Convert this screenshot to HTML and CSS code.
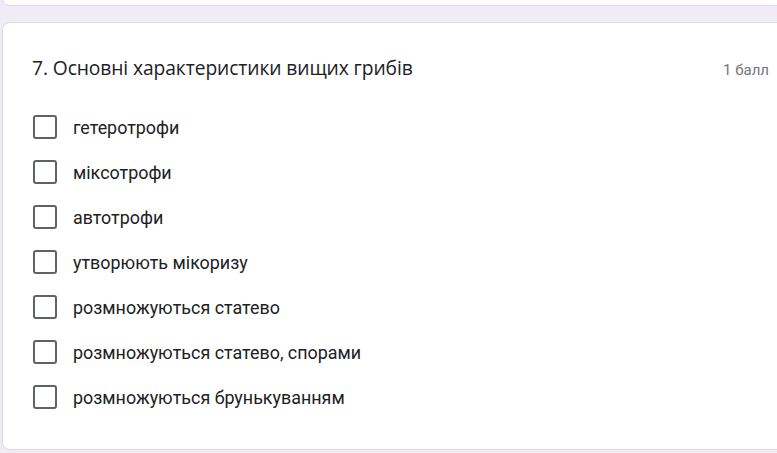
FILE: index.html
```html
<!DOCTYPE html>
<html lang="uk">
<head>
<meta charset="utf-8">
<link rel="stylesheet" href="styles.css">
</head>
<body>
<div class="page">
  <div class="card prev"></div>
  <div class="card question">
    <div class="head">
      <div class="title">7. Основні характеристики вищих грибів</div>
      <div class="points">1 балл</div>
    </div>
    <div class="options">
      <label class="opt"><span class="box"></span><span class="txt">гетеротрофи</span></label>
      <label class="opt"><span class="box"></span><span class="txt">міксотрофи</span></label>
      <label class="opt"><span class="box"></span><span class="txt">автотрофи</span></label>
      <label class="opt"><span class="box"></span><span class="txt">утворюють мікоризу</span></label>
      <label class="opt"><span class="box"></span><span class="txt">розмножуються статево</span></label>
      <label class="opt"><span class="box"></span><span class="txt">розмножуються статево, спорами</span></label>
      <label class="opt"><span class="box"></span><span class="txt">розмножуються брунькуванням</span></label>
    </div>
  </div>
</div>
</body>
</html>
```
FILE: styles.css
```css
html, body {
  margin: 0;
  padding: 0;
  background: #efebf7;
  overflow: hidden;
  width: 777px;
  height: 453px;
}
.page {
  display: flex;
  flex-direction: column;
  gap: 16px;
  margin-left: 2px;
  margin-right: -20px;
}
.card {
  background: #fff;
  border: 1px solid #dadce0;
  border-radius: 8px;
}
.prev {
  height: 28px;
  margin-top: -24px;
}
.question {
  box-sizing: border-box;
  height: 428px;
  padding: 0 0 0 29px;
}
.head {
  display: flex;
  align-items: baseline;
  justify-content: space-between;
  padding-top: 31px;
  padding-right: 27px;
}
.title {
  font-family: "Open Sans", sans-serif;
  font-size: 19.25px;
  color: #202124;
  letter-spacing: -0.1px;
}
.points {
  font-family: Roboto, sans-serif;
  font-size: 15px;
  color: #70757a;
}
.options {
  display: flex;
  flex-direction: column;
  gap: 21px;
  margin-top: 34px;
}
.opt {
  display: flex;
  align-items: center;
  gap: 16px;
  height: 24px;
}
.box {
  width: 24px;
  height: 24px;
  box-sizing: border-box;
  border: 2.5px solid #5f6368;
  border-radius: 3px;
  margin-left: 1px;
}
.txt {
  font-family: Roboto, sans-serif;
  font-size: 17.9px;
  color: #202124;
}
```
